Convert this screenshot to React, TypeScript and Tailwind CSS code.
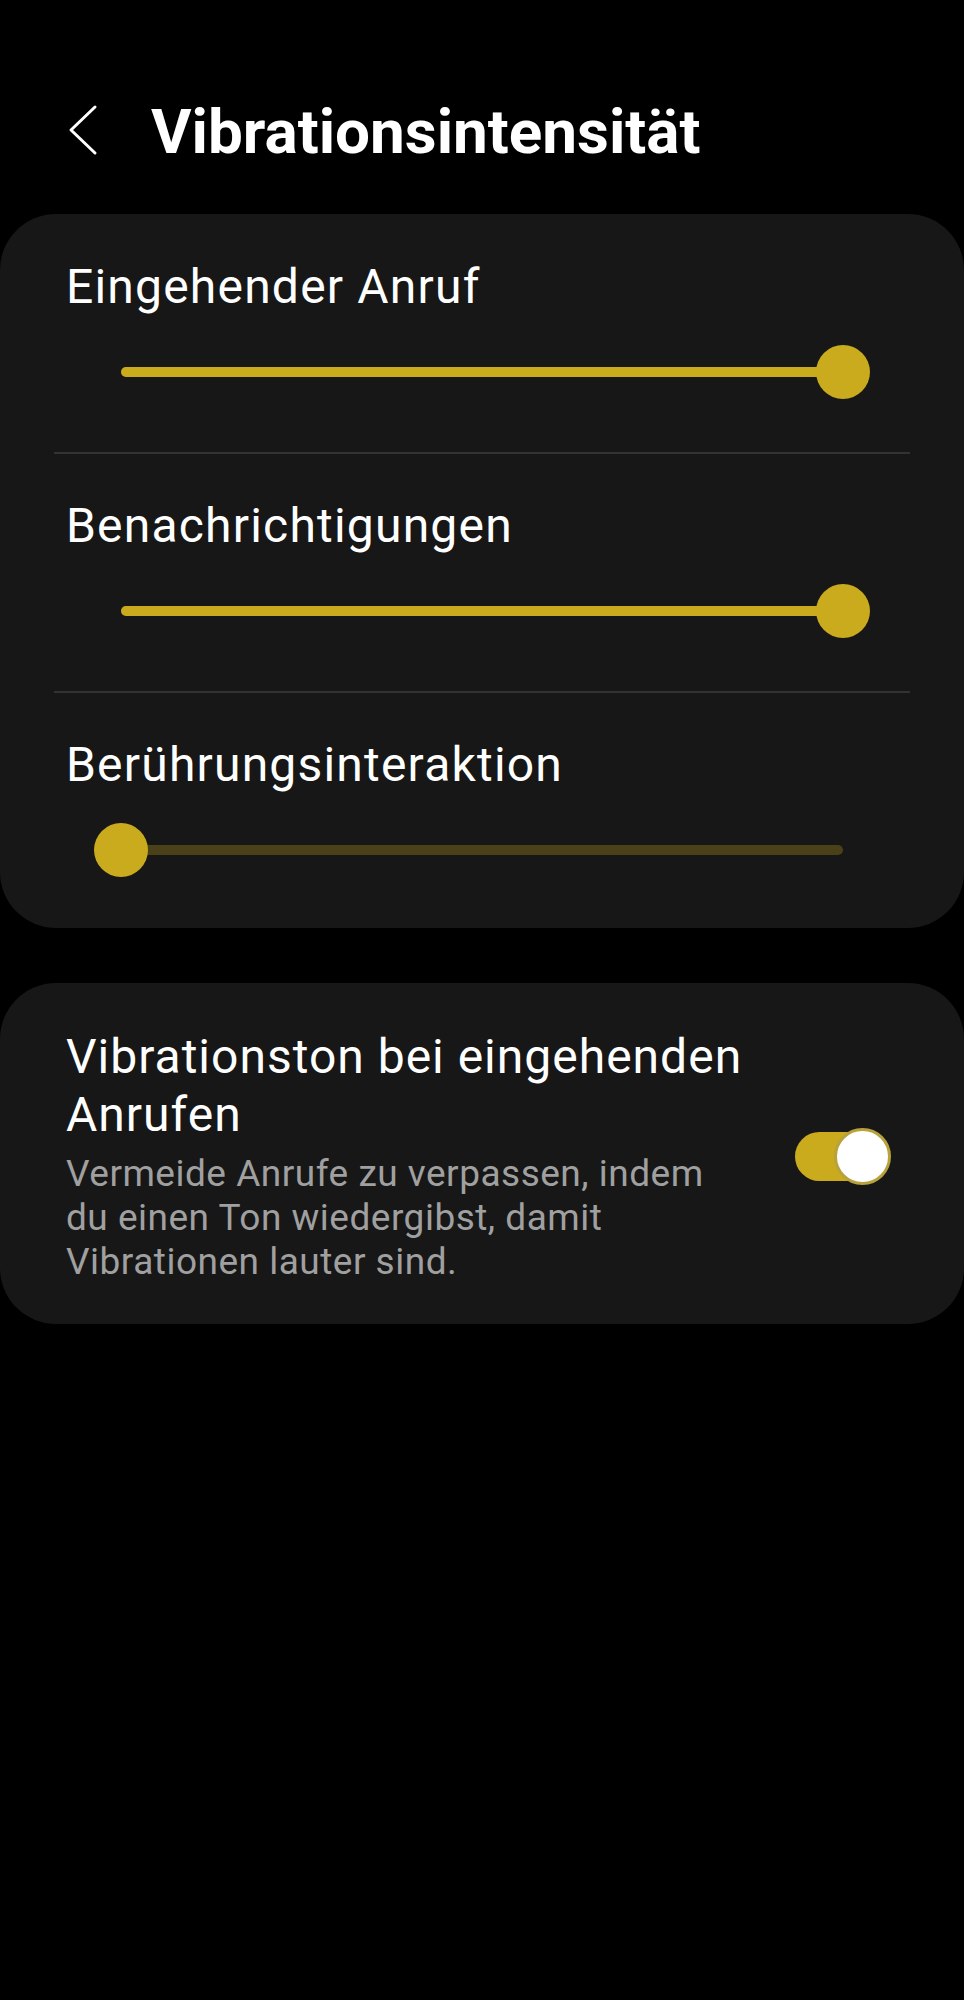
import React from "react";

const font = { fontFamily: "Roboto, 'Noto Sans', sans-serif" };

function Slider({ value }: { value: number }) {
  // value 0..1, track length 722px
  const pos = value * 722;
  return (
    <div className="relative mx-[94px] mt-[30px] h-[54px]">
      <div className="absolute left-[27px] right-[27px] top-[22px] h-[10px] rounded-full bg-[#4a4119]" />
      <div
        className="absolute left-[27px] top-[22px] h-[10px] rounded-full bg-[#c9ab1d]"
        style={{ width: pos }}
      />
      <div
        className="absolute top-0 h-[54px] w-[54px] rounded-full bg-[#c9ab1d]"
        style={{ left: pos }}
      />
    </div>
  );
}

function Row({ label, value, className }: { label: string; value: number; className: string }) {
  return (
    <div className={className}>
      <div className="pl-[66px] text-[48px] leading-[56px] tracking-[1.2px] text-white">{label}</div>
      <Slider value={value} />
    </div>
  );
}

export default function App() {
  return (
    <div className="min-h-[2000px] bg-black" style={font}>
      {/* Kopfzeile */}
      <div className="flex h-[214px] items-start pt-[96px]">
        <svg className="ml-[66px] mt-[8px]" width="34" height="52" viewBox="0 0 34 52" fill="none">
          <polyline points="29,3 5,26 29,49" stroke="white" strokeWidth="3" strokeLinecap="round" strokeLinejoin="round" />
        </svg>
        <h1 className="ml-[51px] text-[62px] font-bold leading-[72px] text-white">
          Vibrationsintensität
        </h1>
      </div>

      {/* Schieberegler */}
      <div className="rounded-[56px] bg-[#171717]">
        <Row label="Eingehender Anruf" value={1} className="pt-[45px] pb-[53px]" />
        <div className="mx-[54px] h-[2px] bg-[#333333]" />
        <Row label="Benachrichtigungen" value={1} className="pt-[44px] pb-[53px]" />
        <div className="mx-[54px] h-[2px] bg-[#333333]" />
        <Row label="Berührungsinteraktion" value={0} className="pt-[44px] pb-[51px]" />
      </div>

      {/* Vibrationston */}
      <div className="mt-[55px] flex items-center rounded-[56px] bg-[#171717] pb-[40px] pl-[66px] pr-[73px] pt-[45px]">
        <div className="w-[700px]">
          <div className="text-[48px] leading-[58px] tracking-[1px] text-white">Vibrationston bei eingehenden Anrufen</div>
          <div className="mt-[8px] w-[665px] text-[37px] leading-[44px] tracking-[0.5px] text-[#a0a0a0]">
            Vermeide Anrufe zu verpassen, indem du einen Ton wiedergibst, damit Vibrationen lauter sind.
          </div>
        </div>
        <div className="ml-auto flex h-[57px] w-[96px] items-center">
          <div className="relative h-[49px] w-[94px] rounded-full bg-[#c9ab1d]">
            <div className="absolute right-[-2px] top-[-4px] h-[57px] w-[57px] rounded-full border-[3px] border-[#b8a23c] bg-white" />
          </div>
        </div>
      </div>
    </div>
  );
}
